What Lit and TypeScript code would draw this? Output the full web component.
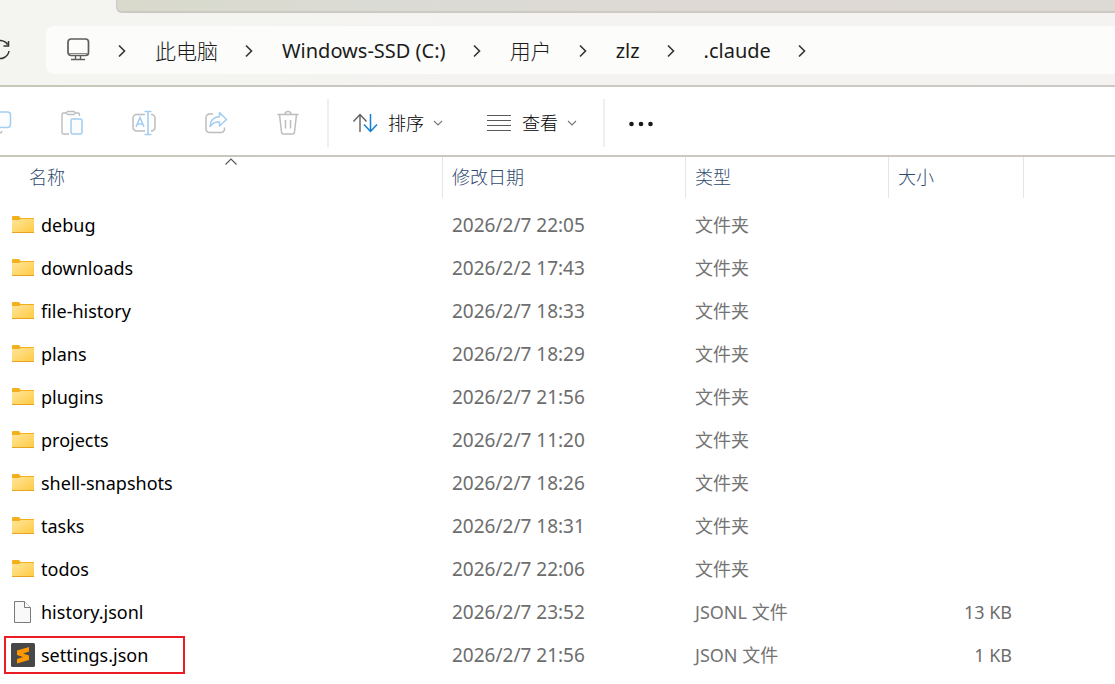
import { LitElement, html, svg, css, nothing } from "lit";
import { customElement } from "lit/decorators.js";

type Kind = "folder" | "file" | "sublime";
interface Entry { name: string; date: string; type: string; size: string; kind: Kind; marked?: boolean; }

const folder = (name: string, date: string): Entry => ({ name, date, type: "文件夹", size: "", kind: "folder" });

const entries: Entry[] = [
  folder("debug", "2026/2/7 22:05"),
  folder("downloads", "2026/2/2 17:43"),
  folder("file-history", "2026/2/7 18:33"),
  folder("plans", "2026/2/7 18:29"),
  folder("plugins", "2026/2/7 21:56"),
  folder("projects", "2026/2/7 11:20"),
  folder("shell-snapshots", "2026/2/7 18:26"),
  folder("tasks", "2026/2/7 18:31"),
  folder("todos", "2026/2/7 22:06"),
  { name: "history.jsonl", date: "2026/2/7 23:52", type: "JSONL 文件", size: "13 KB", kind: "file" },
  { name: "settings.json", date: "2026/2/7 21:56", type: "JSON 文件", size: "1 KB", kind: "sublime", marked: true },
];

const crumbs = ["此电脑", "Windows-SSD (C:)", "用户", "zlz", ".claude"];

const icon = (w: number, h: number, body: unknown) =>
  html`<svg width=${w} height=${h} viewBox="0 0 ${w} ${h}" fill="none" aria-hidden="true">${body}</svg>`;

const chevronRight = icon(8, 14, svg`<path d="M1 1.500 6.500 7 1 12.500" stroke="#333" stroke-width="1.600"/>`);
const chevronDown = icon(10, 6, svg`<path d="M1 1 5 5 9 1" stroke="#777" stroke-width="1.100"/>`);
const sortMark = icon(12, 7, svg`<path d="M.5 6.500 6 1 11.500 6.500" stroke="#555" stroke-width="1.100"/>`);

const reload = icon(22, 22, svg`<path d="M18.600 5.500A9 9 0 1 0 20 12M19.500 2v5h-5" stroke="#333" stroke-width="1.500"/>`);

const monitor = icon(24, 24, svg`
  <rect x="2" y="1" width="20.500" height="16.500" rx="3" stroke="#5c5c5c" stroke-width="1.700"/>
  <path d="M2.500 15.500h19.500" stroke="#8a8a8a"/>
  <path d="M9.500 18v3M14.500 18v3M5 21.500h14" stroke="#5c5c5c" stroke-width="1.400"/>`);

const copy = icon(24, 24, svg`
  <path d="M4 5v13a4 4 0 0 0 4 4h4q1.500 0 2-2" stroke="#c4c4c4" stroke-width="1.500"/>
  <rect x="4" y="1" width="18.500" height="15.500" rx="3" fill="#fafcfe" stroke="#a3cdf0" stroke-width="1.500"/>`);

const paste = icon(24, 26, svg`
  <path d="M7 3H3.500Q2 3 2 4.500v18Q2 24 3.500 24H9M15 3h3q1.500 0 1.500 1.500V6" stroke="#bdbdbd" stroke-width="1.400"/>
  <rect x="6.500" y="1.500" width="8.500" height="3" rx="1.500" stroke="#bdbdbd" stroke-width="1.300"/>
  <rect x="11" y="9" width="11" height="15" rx="1.500" fill="#fafcfe" stroke="#a3cdf0" stroke-width="1.500"/>`);

const rename = icon(24, 26, svg`
  <path d="M13 4.500H4.500A3.500 3.500 0 0 0 1 8v9.500A3.500 3.500 0 0 0 4.500 21H13M19 4.500h.500a3.500 3.500 0 0 1 3.500 3.500v9.500a3.500 3.500 0 0 1-3.500 3.500h-.500" stroke="#bdbdbd" stroke-width="1.500"/>
  <path d="M4 17 8 7.500l4 9.500M5.500 14h5.200M12.500 1.500h7M12.500 24.500h7M16 1.500v23" stroke="#a3cdf0" stroke-width="1.600"/>`);

const share = icon(24, 24, svg`
  <path d="M9 3H5.500A3.500 3.500 0 0 0 2 6.500V18a3.500 3.500 0 0 0 3.500 3.500H17a3.500 3.500 0 0 0 3.500-3.500v-1.500" stroke="#bdbdbd" stroke-width="1.500"/>
  <path d="M15.500 1.500 22.500 8.500l-7 6.500v-4q-6-.5-9.500 4.500.5-9 9.500-10z" stroke="#a3cdf0" stroke-width="1.500" stroke-linejoin="round"/>`);

const trash = icon(24, 26, svg`
  <path d="M1.500 4.500h21M9 4.500q0-3 3-3t3 3M3.500 4.500l2 17.500q.2 2 2 2h9q1.800 0 2-2l2-17.500M9.500 10v8.500M14.500 10v8.500" stroke="#bdbdbd" stroke-width="1.500"/>`);

const sort = icon(26, 20, svg`
  <path d="M7 19V2M.5 8.500 7 1.500l6.500 7" stroke="#606060" stroke-width="1.400"/>
  <path d="M17.500 1v17M11 11.500l6.500 7 6.500-7" stroke="#0f7fd8" stroke-width="1.500"/>`);

const lines = icon(26, 18, svg`<path d="M0 1.500h24M0 6.500h24M0 11.500h24M0 16.500h24" stroke="#5a5a5a"/>`);
const dots = icon(26, 6, svg`<g fill="#1a1a1a"><circle cx="3.500" cy="4" r="2.300"/><circle cx="13" cy="4" r="2.300"/><circle cx="22.500" cy="4" r="2.300"/></g>`);

const kindIcons: Record<Kind, unknown> = {
  folder: icon(24, 20, svg`
    <defs><linearGradient id="f" x1="0" y1="0" x2="1" y2="1"><stop stop-color="#ffe59a"/><stop offset="1" stop-color="#ffca42"/></linearGradient></defs>
    <path d="M1 2q0-1 1-1h6l1.500 2H23v4H1z" fill="#f3b01c"/>
    <path d="M1 5h7l2-1h13v14H1z" fill="url(#f)"/>
    <path d="M1 17.500h22" stroke="#e6a421"/>`),
  file: icon(24, 24, svg`
    <path d="M3.500 1.500h10l6 6v15h-16z" fill="#f9f9f9" stroke="#7b7b7b"/><path d="M13.500 1.500v6h6" fill="#fff" stroke="#7b7b7b"/>`),
  sublime: icon(24, 24, svg`
    <rect width="24" height="24" rx="1.500" fill="#474747"/>
    <path d="M18 4v4.500l-6 2 6 2v4.500L6 20.500V16l6-2-6-2V7.500z" fill="#ff9800"/>`),
};

@customElement("app-root")
export class AppRoot extends LitElement {
  static styles = css`
    :host {
      display: block;
      min-height: 100vh;
      overflow: hidden;
      background: #fff;
      color: #000;
      font: 18px/24px "Noto Sans", "Noto Sans CJK SC", sans-serif;
    }
    svg { display: block; flex: none; overflow: visible; }
    button { border: 0; padding: 0; background: none; font: inherit; color: inherit; display: flex; align-items: center; }
    .top { background: linear-gradient(90deg, #f4f5f0, #f4f3f1 40%, #f4f3f1); border-bottom: 2px solid; border-image: linear-gradient(90deg, #c6c9b6, #cac7c0 30%, #cdc8c3) 1; }
    .tab { height: 11px; margin-left: 116px; background: linear-gradient(90deg, #d9dacc, #dbdbd5 26%, #ded9d4 55%, #ddd9d4); border: 2px solid #cbc9c1; border-width: 0 0 2px 1px; border-radius: 0 0 0 6px; }
    .address { display: flex; align-items: center; padding: 13px 0 11px; }
    .reload { width: 46px; margin-left: -11px; margin-right: 11px; }
    .path { flex: 1; display: flex; align-items: center; height: 48px; padding-left: 20px; background: #fcfcfa; border-radius: 8px 0 0 8px; font-size: 20px; line-height: 28px; color: #1b1b1b; }
    .path ol { display: flex; align-items: center; list-style: none; margin: 0; padding: 2px 0 0 28px; }
    .path li { display: flex; align-items: center; gap: 29px; margin-right: 27px; }
    .path a { color: inherit; text-decoration: none; white-space: nowrap; }
    .path :lang(zh) { font-size: 21px; font-weight: 300; }
    .tools { display: flex; align-items: center; padding: 12px 0 8px; border-bottom: 2px solid; border-image: linear-gradient(90deg, #c6c9b6, #cac7c0 30%, #cdc8c3) 1; }
    .actions { display: flex; margin-left: -36px; }
    .actions button { width: 72px; height: 48px; justify-content: center; }
    .rule { width: 2px; height: 48px; background: #efefef; }
    .actions + .rule { margin-left: 3px; }
    .menus { display: flex; gap: 44px; padding: 0 26px 0 24px; color: #000; font-weight: 300; }
    .menus button { gap: 9px; }
    .more { margin-left: 23px; }
    table { width: 100%; table-layout: fixed; border-collapse: separate; border-spacing: 0; }
    .c-name { width: 443px; } .c-date { width: 243px; } .c-type { width: 203px; } .c-size { width: 135px; }
    th { position: relative; height: 41px; padding: 0 0 2px 9px; box-sizing: border-box; text-align: left; font-weight: 300; color: #2f4a70; border-right: 1px solid #e5e5e5; }
    th:first-child { padding-left: 29px; }
    th:last-child { border: 0; }
    .mark { position: absolute; top: 1px; left: 225px; }
    .space td { height: 5px; }
    td { height: 43px; padding: 0 0 0 9px; color: #6d6d6d; white-space: nowrap; }
    td.name { position: relative; padding-left: 11px; color: #000; }
    .entry { display: flex; align-items: center; gap: 6px; }
    td.date { font-size: 19px; }
    td.type { color: #737373; }
    td.size { text-align: right; padding: 0 12px 0 0; }
    .frame { position: absolute; left: 4px; top: 3px; width: 177px; height: 34px; border: 2px solid #ec1c24; pointer-events: none; }
  `;

  render() {
    return html`
      <header class="top">
        <div class="tab"></div>
        <div class="address">
          <button class="reload" aria-label="刷新">${reload}</button>
          <nav class="path" aria-label="地址">
            ${monitor}
            <ol>
              ${crumbs.map((c) => html`<li>${chevronRight}<a href="#" lang=${/^[\x00-\x7f]+$/.test(c) ? "en" : "zh"}>${c}</a></li>`)}
              <li>${chevronRight}</li>
            </ol>
          </nav>
        </div>
      </header>
      <div class="tools" role="toolbar">
        <div class="actions">
          <button aria-label="复制">${copy}</button>
          <button aria-label="粘贴">${paste}</button>
          <button aria-label="重命名">${rename}</button>
          <button aria-label="共享">${share}</button>
          <button aria-label="删除">${trash}</button>
        </div>
        <div class="rule"></div>
        <div class="menus">
          <button>${sort}<span>排序</span>${chevronDown}</button>
          <button>${lines}<span>查看</span>${chevronDown}</button>
        </div>
        <div class="rule"></div>
        <button class="more" aria-label="更多">${dots}</button>
      </div>
      <table>
        <colgroup><col class="c-name"><col class="c-date"><col class="c-type"><col class="c-size"><col></colgroup>
        <thead>
          <tr><th>名称<span class="mark">${sortMark}</span></th><th>修改日期</th><th>类型</th><th>大小</th><th></th></tr>
        </thead>
        <tbody>
          <tr class="space"><td colspan="5"></td></tr>
          ${entries.map((e) => html`<tr>
            <td class="name"><div class="entry">${kindIcons[e.kind]}<span>${e.name}</span></div>${e.marked ? html`<div class="frame"></div>` : nothing}</td>
            <td class="date">${e.date}</td><td class="type">${e.type}</td><td class="size">${e.size}</td><td></td>
          </tr>`)}
        </tbody>
      </table>`;
  }
}
